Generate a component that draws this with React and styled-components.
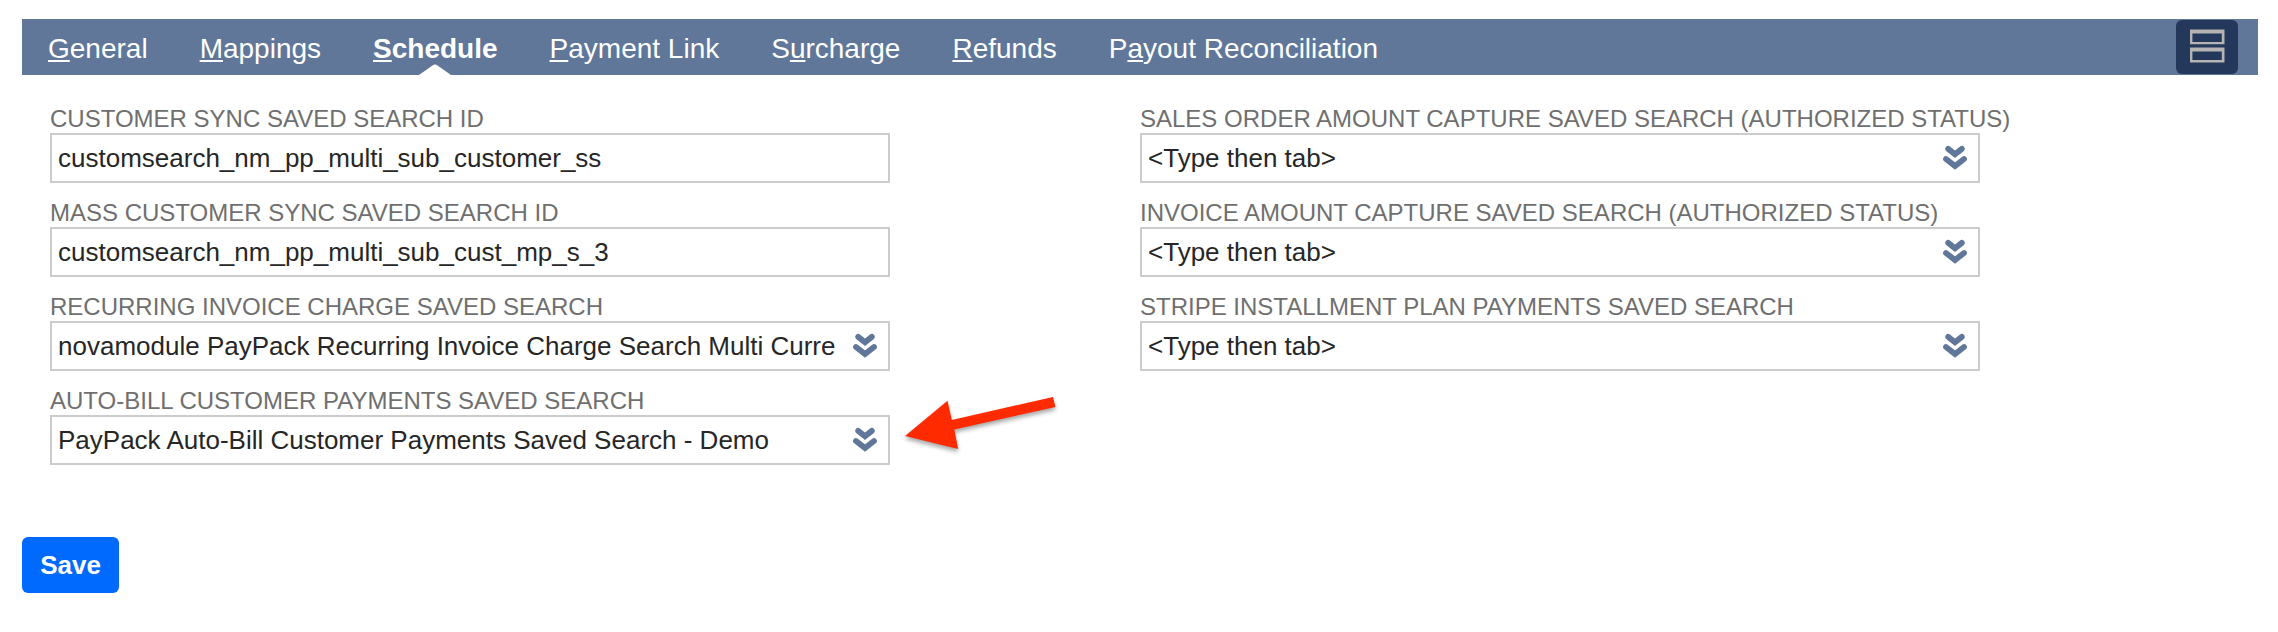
import React from "react";
import styled, { createGlobalStyle } from "styled-components";

const Global = createGlobalStyle`
  *, *::before, *::after { box-sizing: border-box; }
  body { margin: 0; background: #fff; font-family: "Liberation Sans", Arial, sans-serif; }
`;

const Page = styled.main`
  display: flex;
  flex-direction: column;
  align-items: stretch;
  height: 632px;
  padding: 19px 20px 0 22px;
  overflow: hidden;
`;

const TabBar = styled.nav`
  display: flex;
  justify-content: space-between;
  align-items: center;
  flex: none;
  height: 56px;
  padding: 0 20px 0 26px;
  background: #607799;
`;

const Tabs = styled.div`
  display: flex;
  gap: 52px;
  height: 56px;
`;

const Tab = styled.a`
  position: relative;
  padding-top: 2px;
  font-size: 28px;
  line-height: 56px;
  font-weight: ${(p) => (p.$active ? 700 : 400)};
  color: #fff;
  white-space: nowrap;
`;

const Key = styled.span`
  text-decoration: underline;
  text-decoration-thickness: 2px;
  text-underline-offset: 2px;
  text-decoration-skip-ink: none;
`;

const Notch = styled.svg`
  position: absolute;
  left: 50%;
  bottom: 0;
  width: 34px;
  height: 12px;
  margin-left: -17px;
`;

const LayoutButton = styled.button`
  display: flex;
  width: 62px;
  height: 54px;
  padding: 0;
  border: 0;
  border-radius: 6px;
  background: #24385b;
`;

const Columns = styled.section`
  display: grid;
  grid-template-columns: 840px 840px;
  column-gap: 250px;
  flex: none;
  padding: 30px 0 0 28px;
`;

const Column = styled.div`
  display: flex;
  flex-direction: column;
  gap: 16px;
`;

const Field = styled.div`
  position: relative;
  display: flex;
  flex-direction: column;
  height: 78px;
`;

const Label = styled.label`
  height: 28px;
  font-size: 24px;
  line-height: 28px;
  color: #6f6f6f;
  white-space: nowrap;
`;

const Box = styled.div`
  display: flex;
  justify-content: space-between;
  height: 50px;
  padding: 0 10px 0 6px;
  border: 2px solid #ccc;
  background: #fff;
`;

const Value = styled.span`
  font-size: 26px;
  line-height: 46px;
  color: #262626;
  white-space: nowrap;
`;

const Chevrons = styled.svg`
  flex: none;
  width: 26px;
  height: 26px;
  margin-top: 10px;
`;

const Pointer = styled.svg`
  position: absolute;
  left: 850px;
  top: -5px;
  width: 170px;
  height: 70px;
  overflow: visible;
  filter: drop-shadow(0 3px 2px rgba(0, 0, 0, 0.35));
`;

const SaveButton = styled.button`
  flex: none;
  align-self: flex-start;
  width: 97px;
  height: 56px;
  margin-top: 72px;
  padding: 0;
  border: 0;
  border-radius: 6px;
  background: #006aff;
  color: #fff;
  font: 700 26px/56px "Liberation Sans", Arial, sans-serif;
`;

const tabs = [
  ["", "G", "eneral"],
  ["", "M", "appings"],
  ["", "S", "chedule"],
  ["", "P", "ayment Link"],
  ["S", "u", "rcharge"],
  ["", "R", "efunds"],
  ["P", "a", "yout Reconciliation"],
];

const left = [
  { label: "CUSTOMER SYNC SAVED SEARCH ID", value: "customsearch_nm_pp_multi_sub_customer_ss" },
  { label: "MASS CUSTOMER SYNC SAVED SEARCH ID", value: "customsearch_nm_pp_multi_sub_cust_mp_s_3" },
  { label: "RECURRING INVOICE CHARGE SAVED SEARCH", value: "novamodule PayPack Recurring Invoice Charge Search Multi Curre", picker: true },
  { label: "AUTO-BILL CUSTOMER PAYMENTS SAVED SEARCH", value: "PayPack Auto-Bill Customer Payments Saved Search - Demo", picker: true, pointer: true },
];

const right = [
  "SALES ORDER AMOUNT CAPTURE SAVED SEARCH (AUTHORIZED STATUS)",
  "INVOICE AMOUNT CAPTURE SAVED SEARCH (AUTHORIZED STATUS)",
  "STRIPE INSTALLMENT PLAN PAYMENTS SAVED SEARCH",
].map((label) => ({ label, value: "<Type then tab>", picker: true }));

function SearchField({ label, value, picker, pointer }) {
  return (
    <Field>
      <Label>{label}</Label>
      <Box>
        <Value>{value}</Value>
        {picker && (
          <Chevrons viewBox="0 0 26 26" fill="none" stroke="#607799" strokeWidth="5.8" strokeLinecap="round">
            <path d="M6.2 3.9 L13 9.2 L19.8 3.9" />
            <path d="M4 14 L13 21 L22 14" />
          </Chevrons>
        )}
      </Box>
      {pointer && (
        <Pointer viewBox="900 382 170 70">
          <path d="M905 436 L947.5 400.7 L951.8 420 L1053 397 L1055.4 407 L954.3 429.5 L958.2 449 Z" fill="#ff2a00" />
        </Pointer>
      )}
    </Field>
  );
}

export default function App() {
  return (
    <>
      <Global />
      <Page>
        <TabBar>
          <Tabs>
            {tabs.map(([before, key, after]) => {
              const active = after === "chedule";
              return (
                <Tab key={after} $active={active}>
                  {before}
                  <Key>{key}</Key>
                  {after}
                  {active && (
                    <Notch viewBox="0 0 34 12">
                      <path d="M1 12 L14.5 2.4 Q17 0.8 19.5 2.4 L33 12 Z" fill="#fff" />
                    </Notch>
                  )}
                </Tab>
              );
            })}
          </Tabs>
          <LayoutButton aria-label="Toggle layout">
            <svg width="62" height="54" viewBox="0 0 62 54" fill="#b5b4b3" fillRule="evenodd">
              <path d="M14 9.5 H48.5 V24.3 H14 Z M16.4 13.6 V21.9 H45.8 V13.6 Z" />
              <path d="M14 27.5 H48.5 V42.5 H14 Z M16.4 31.6 V39.9 H45.8 V31.6 Z" />
            </svg>
          </LayoutButton>
        </TabBar>
        <Columns>
          <Column>{left.map((f) => <SearchField key={f.label} {...f} />)}</Column>
          <Column>{right.map((f) => <SearchField key={f.label} {...f} />)}</Column>
        </Columns>
        <SaveButton>Save</SaveButton>
      </Page>
    </>
  );
}
